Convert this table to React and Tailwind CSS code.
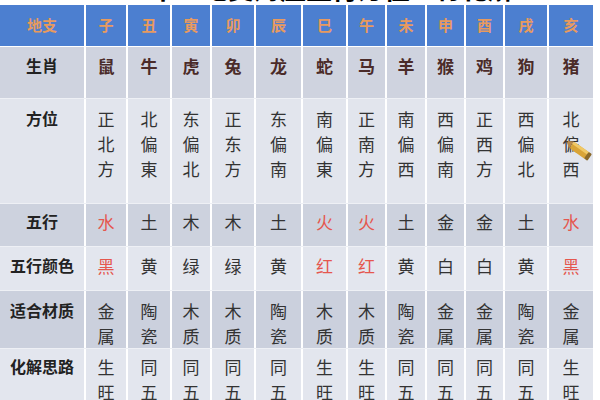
const COLS = [86, 42, 44, 40, 44, 47, 45, 39, 40, 39, 39, 44, 44];

const BRANCHES = ['子', '丑', '寅', '卯', '辰', '巳', '午', '未', '申', '酉', '戌', '亥'];

const RED = 'text-[#e5574e]';

const ROWS = [
  {
    label: '生肖',
    height: 'h-[52px]',
    pad: 'pt-[6px]',
    bg: 'bg-[#cfd3df]',
    cells: ['鼠', '牛', '虎', '兔', '龙', '蛇', '马', '羊', '猴', '鸡', '狗', '猪'],
    cellClass: () => 'font-bold text-[#4b2b29]',
  },
  {
    label: '方位',
    height: 'h-[105px]',
    pad: 'pt-[7px]',
    bg: 'bg-[#e2e5ed]',
    cells: ['正北方', '北偏東', '东偏北', '正东方', '东偏南', '南偏東', '正南方', '南偏西', '西偏南', '正西方', '西偏北', '北偏西'],
  },
  {
    label: '五行',
    height: 'h-[43px]',
    pad: 'pt-[5px]',
    bg: 'bg-[#cdd2de]',
    cells: ['水', '土', '木', '木', '土', '火', '火', '土', '金', '金', '土', '水'],
    cellClass: (v) => (v === '水' || v === '火' ? RED : ''),
  },
  {
    label: '五行颜色',
    height: 'h-[44px]',
    pad: 'pt-[6px]',
    bg: 'bg-[#e3e6ee]',
    cells: ['黑', '黄', '绿', '绿', '黄', '红', '红', '黄', '白', '白', '黄', '黑'],
    cellClass: (v) => (v === '黑' || v === '红' ? RED : ''),
  },
  {
    label: '适合材质',
    height: 'h-[58px]',
    pad: 'pt-[7px]',
    bg: 'bg-[#cbd0dd]',
    cells: ['金属', '陶瓷', '木质', '木质', '陶瓷', '木质', '木质', '陶瓷', '金属', '金属', '陶瓷', '金属'],
  },
  {
    label: '化解思路',
    height: 'h-[110px]',
    pad: 'pt-[5px]',
    bg: 'bg-[#e3e6ee]',
    cells: ['生旺五行', '同五行', '同五行', '同五行', '同五行', '生旺五行', '生旺五行', '同五行', '同五行', '同五行', '同五行', '生旺五行'],
  },
];

const Cell = ({ width, last, className = '', children }) => (
  <div
    className={`shrink-0 flex flex-col items-center ${last ? '' : 'border-r-2 border-white'} ${className}`}
    style={{ width }}
  >
    {children}
  </div>
);

const Pencil = () => (
  <svg
    className="absolute left-[562px] top-[136px]"
    width="34"
    height="28"
    viewBox="0 0 34 28"
  >
    <g transform="rotate(35 17 14)">
      <rect x="8" y="10" width="20" height="8" rx="2" fill="#d9a437" />
      <rect x="8" y="10" width="20" height="3" rx="1" fill="#f0c865" />
      <rect x="26" y="10" width="4" height="8" rx="1" fill="#8c6a2a" />
      <polygon points="8,10 8,18 1,14" fill="#b8894a" />
      <polygon points="3,13 3,15 1,14" fill="#3b2a1a" />
    </g>
  </svg>
);

const App = () => {
  return (
    <div
      className="relative w-[600px] h-[400px] overflow-hidden bg-white text-[#333]"
      style={{ fontFamily: '"Noto Sans CJK SC", "Noto Sans", sans-serif' }}
    >
      <div className="h-[5px] overflow-hidden">
        <div className="-mt-[26px] pl-[150px] text-[26px] leading-[28px] font-bold text-black">
          十二地支对应生肖方位五行化解
        </div>
      </div>

      <div className="flex h-[42px] bg-[#4c7fd0] border-b border-white w-[593px]">
        {['地支', ...BRANCHES].map((h, i) => (
          <Cell key={h} width={COLS[i]} last={i === 12} className="justify-center">
            <span className="text-[15px] font-bold text-[#e89a5e]">{h}</span>
          </Cell>
        ))}
      </div>

      {ROWS.map((row) => (
        <div
          key={row.label}
          className={`flex w-[593px] ${row.height} ${row.bg} border-b border-[#eef0f5]`}
        >
          <Cell width={COLS[0]} className={row.pad}>
            <span className="text-[16px] leading-[25px] font-bold text-[#222]">
              {row.label}
            </span>
          </Cell>
          {row.cells.map((v, i) => (
            <Cell key={i} width={COLS[i + 1]} last={i === 11} className={row.pad}>
              {[...v].map((ch, j) => (
                <span
                  key={j}
                  className={`text-[17px] leading-[25px] ${row.cellClass ? row.cellClass(v) : ''}`}
                >
                  {ch}
                </span>
              ))}
            </Cell>
          ))}
        </div>
      ))}

      <Pencil />
    </div>
  );
};

export default App;
